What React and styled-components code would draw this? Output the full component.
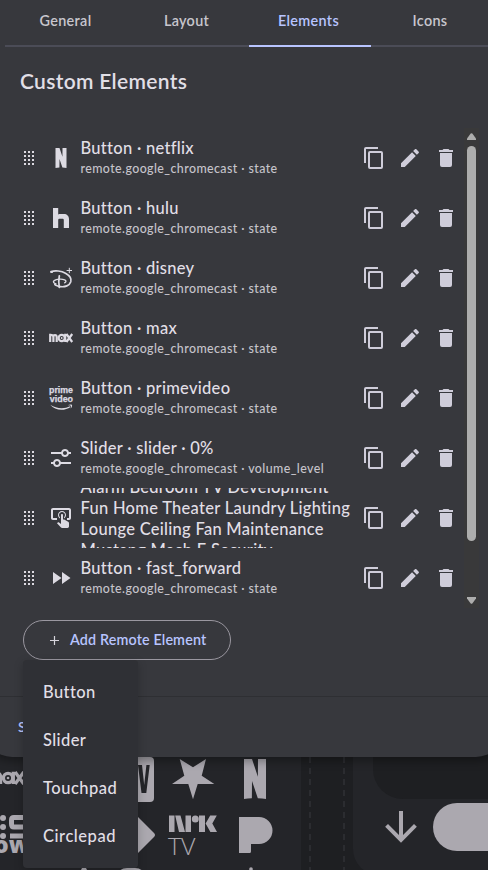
import React from 'react';
import styled, { createGlobalStyle } from 'styled-components';

const GlobalStyle = createGlobalStyle`
  *, *::before, *::after { box-sizing: border-box; }
  body { margin: 0; background: #1e1f22; font-family: Lato, "Open Sans", sans-serif; }
`;

const Screen = styled.div`
  width: 488px;
  height: 870px;
  overflow: hidden;
  position: relative;
  background: #1e1f22;
  color: #e1dfe6;
`;

/* ---- Dialog ---- */
const Dialog = styled.main`
  position: relative;
  z-index: 1;
  width: 520px;
  height: 757px;
  margin-left: -16px;
  padding-left: 16px;
  display: flex;
  flex-direction: column;
  background: #37383d;
  border-radius: 0 0 28px 28px;
  box-shadow: 0 4px 10px rgba(0, 0, 0, 0.35);
`;

const TabBar = styled.nav`
  display: flex;
  flex: none;
  height: 47px;
  margin-left: 5px;
`;

const Tab = styled.button`
  flex: none;
  width: 122px;
  height: 47px;
  padding: 0 ${p => p.$inset}px 4px 0;
  border: 0;
  border-bottom: 2px solid ${p => (p.$active ? '#b8c4ff' : '#4b4c57')};
  background: none;
  color: ${p => (p.$active ? '#b8c4ff' : '#c8c6cd')};
  font: 600 14.4px/20px Lato, sans-serif;
  letter-spacing: 0.32px;
`;

const Heading = styled.h1`
  flex: none;
  height: 81px;
  margin: 0;
  padding: 20px 0 0 20px;
  font: 600 21px/28px Lato, sans-serif;
  letter-spacing: 0.32px;
`;

const ListArea = styled.section`
  flex: none;
  display: flex;
  width: 479px;
  height: 480px;
`;

const List = styled.ul`
  width: 464px;
  margin: 0;
  padding: 0;
  list-style: none;
`;

const Row = styled.li`
  display: flex;
  align-items: center;
  height: 60px;
  padding-left: 24px;
  overflow: hidden;
`;

const Handle = styled.svg`
  flex: none;
  width: 10px;
  height: 14px;
  margin-right: 15px;
  fill: #dcdae1;
`;

const Glyph = styled.svg`
  flex: none;
  width: ${p => p.$size || 24}px;
  height: ${p => p.$size || 24}px;
  fill: ${p => p.$color || '#dddbe3'};
  color: ${p => p.$color || '#dddbe3'};
  overflow: visible;
`;

const Labels = styled.div`
  flex: none;
  width: 281px;
  padding: 2px 0 0 7.5px;
`;

const Primary = styled.div`
  font: 500 16.5px/20.8px Lato, sans-serif;
  letter-spacing: 0.28px;
  white-space: nowrap;
`;

const Secondary = styled.div`
  padding: 1px 0;
  font: 500 12.4px/20px Lato, sans-serif;
  letter-spacing: 0.42px;
  color: #c6c4cb;
  white-space: nowrap;
`;

const Actions = styled.div`
  display: flex;
  gap: 12px;
  margin-left: 8px;
`;

const ActionButton = styled.button`
  display: flex;
  padding: 0;
  border: 0;
  background: none;
`;

const Scrollbar = styled.div`
  display: flex;
  flex-direction: column;
  align-items: center;
  width: 15px;
  padding: 5px 0 4px;
  background: #39393a;
`;

const ScrollArrow = styled.svg`
  flex: none;
  width: 9px;
  height: 7px;
  fill: #adadad;
`;

const Thumb = styled.div`
  width: 9px;
  height: 395px;
  margin: 6px 0 56px;
  border-radius: 5px;
  background: #adadad;
`;

const AddArea = styled.div`
  flex: none;
  height: 88px;
  padding: 12px 0 0 23px;
`;

const AddButton = styled.button`
  display: flex;
  align-items: center;
  width: 208px;
  height: 40px;
  padding: 0 0 0 26px;
  border: 1px solid #9a97a0;
  border-radius: 20px;
  background: none;
  color: #b8c4ff;
  font: 600 14.3px/20px Lato, sans-serif;
  letter-spacing: 0.15px;
  white-space: nowrap;
`;

const Plus = styled.svg`
  width: 9px;
  height: 9px;
  margin-right: 11px;
  stroke: #d6d4db;
  stroke-width: 1.2;
`;

const Footer = styled.footer`
  flex: 1;
  border-top: 1px solid #2e2f33;
  padding: 20px 0 0 18px;
  color: #b8c4ff;
  font: 600 14px/20px Lato, sans-serif;
`;

/* ---- Element type menu ---- */
const Menu = styled.div`
  position: absolute;
  z-index: 2;
  left: 23px;
  top: 660px;
  width: 115px;
  height: 208px;
  padding: 8px 0;
  border-radius: 4px;
  background: #2f3035;
  box-shadow: 0 3px 10px rgba(0, 0, 0, 0.22);
`;

const MenuItem = styled.div`
  height: 48px;
  padding-left: 20px;
  font: 500 16.5px/48px Lato, sans-serif;
  letter-spacing: ${p => p.$spacing}px;
`;

/* ---- Dimmed page behind the dialog ---- */
const Backdrop = styled.div`
  display: flex;
  height: 141px;
  margin-top: -28px;
`;

const IconPanel = styled.div`
  flex: none;
  width: 301px;
  background: #242529;
`;

const Gutter = styled.div`
  flex: none;
  width: 36px;
  height: 141px;
  margin: 0 8px;
  background-image: linear-gradient(#2b2c30 55%, transparent 55%), linear-gradient(#2b2c30 55%, transparent 55%);
  background-size: 2px 11px;
  background-position: 0 6px, 100% 6px;
  background-repeat: repeat-y;
`;

const RemotePanel = styled.div`
  flex: none;
  width: 160px;
  height: 146px;
  border-radius: 0 0 0 26px;
  background: #242529;
`;

const Screenlet = styled.div`
  height: 70px;
  margin-left: 20px;
  border-radius: 0 0 0 30px;
  background: #1e1f22;
`;

const Controls = styled.div`
  display: flex;
  align-items: center;
  gap: 8px;
  padding: 4px 0 0 24px;
`;

const Pill = styled.div`
  width: 96px;
  height: 48px;
  border-radius: 24px;
  background: #aba8af;
`;

const Artwork = styled.svg`
  display: block;
  width: 301px;
  height: 141px;
  fill: #aba8af;
  color: #aba8af;
`;

const PATHS = {
  copy: 'M19,21H8V7H19M19,5H8A2,2 0 0,0 6,7V21A2,2 0 0,0 8,23H19A2,2 0 0,0 21,21V7A2,2 0 0,0 19,5M16,1H4A2,2 0 0,0 2,3V17H4V3H16V1Z',
  edit: 'M20.71,7.04C21.1,6.65 21.1,6 20.71,5.63L18.37,3.29C18,2.9 17.35,2.9 16.96,3.29L15.12,5.12L18.87,8.87M3,17.25V21H6.75L17.81,9.93L14.06,6.18L3,17.25Z',
  remove: 'M19,4H15.5L14.5,3H9.5L8.5,4H5V6H19M6,19A2,2 0 0,0 8,21H16A2,2 0 0,0 18,19V7H6V19Z',
  netflix: 'M6.5,2H10.5L13.44,10.83L13.5,2H17.5V22C16.25,21.78 14.87,21.64 13.41,21.58L10.5,13L10.43,21.59C9.03,21.65 7.7,21.79 6.5,22V2Z',
  hulu: 'M4,2H9.2V8.4C9.8,8.2 10.7,8.1 11.4,8.1H15C17.8,8.1 20,10.2 20,13V22H14.8V13.9C14.8,13.2 14.2,12.7 13.5,12.7H10.5C9.8,12.7 9.2,13.2 9.2,13.9V22H4Z',
  slider: 'M8 13C6.14 13 4.59 14.28 4.14 16H2V18H4.14C4.59 19.72 6.14 21 8 21S11.41 19.72 11.86 18H22V16H11.86C11.41 14.28 9.86 13 8 13M8 19C6.9 19 6 18.1 6 17C6 15.9 6.9 15 8 15S10 15.9 10 17C10 18.1 9.1 19 8 19M19.86 6C19.41 4.28 17.86 3 16 3S12.59 4.28 12.14 6H2V8H12.14C12.59 9.72 14.14 11 16 11S19.41 9.72 19.86 8H22V6H19.86M16 9C14.9 9 14 8.1 14 7C14 5.9 14.9 5 16 5S18 5.9 18 7C18 8.1 17.1 9 16 9Z',
  touchpad: 'M13 5C15.21 5 17 6.79 17 9C17 10.5 16.2 11.77 15 12.46V11.24C15.61 10.69 16 9.89 16 9C16 7.34 14.66 6 13 6S10 7.34 10 9C10 9.89 10.39 10.69 11 11.24V12.46C9.8 11.77 9 10.5 9 9C9 6.79 10.79 5 13 5M20 20.5C19.97 21.32 19.32 21.97 18.5 22H13C12.62 22 12.26 21.85 12 21.57L8 17.37L8.74 16.6C8.93 16.39 9.2 16.28 9.5 16.28H9.7L12 18V9C12 8.45 12.45 8 13 8S14 8.45 14 9V13.47L15.21 13.6L19.15 15.79C19.68 16.03 20 16.56 20 17.14V20.5M20 2H4C2.9 2 2 2.9 2 4V12C2 13.11 2.9 14 4 14H8V12L4 12L4 4H20L20 12H18V14H20V13.97L20.04 14C21.13 13.96 22 13.09 22 12V4C22 2.9 21.11 2 20 2Z',
  forward: 'M13,6V18L21.5,12M4,18L12.5,12L4,6V18Z',
  arrowDown: 'M11,4H13V16L18.5,10.5L19.92,11.92L12,19.84L4.08,11.92L5.5,10.5L11,16V4Z',
};

function MaxMark() {
  return (
    <g fill="none" stroke="currentColor" strokeWidth="2.2">
      <path d="M1.2,16V7.8M1.2,11.2C1.2,8.3 4.4,8.2 4.4,11.2V16M4.4,11.2C4.4,8.3 7.7,8.2 7.7,11.2V16" />
      <circle cx="12.7" cy="12" r="3.1" />
      <circle cx="12.7" cy="12" r="0.9" fill="currentColor" stroke="none" />
      <path d="M16.2,7.8V16M17.4,8L23.2,16M23.2,8L17.4,16" />
    </g>
  );
}

function DisneyMark() {
  return (
    <g fill="none" stroke="currentColor" strokeLinecap="round">
      <path strokeWidth="1.7" d="M3.2,6.2C2.2,6.4 1.4,6 2.2,5.6C6,4.2 12.5,4.8 16.5,7.2C21,9.7 22.6,12.8 21.8,15.8C20.6,19.6 16,21.2 11.5,20.6C8.4,20.2 6.4,19.4 5.8,18.4" />
      <path strokeWidth="1.3" d="M7,17.8C4.6,17.2 3.6,15.6 5.2,14.6C7.4,13.2 12.5,12.6 15.6,13.8C17.4,14.5 17.4,16 15.6,16.8" />
      <path strokeWidth="1.8" d="M10.3,10C9.6,13.5 9.7,18 10.3,21.4" />
      <path strokeWidth="1" strokeLinecap="butt" d="M20.3,1.8V7.2M17.6,4.5H23" />
    </g>
  );
}

function PrimeMark() {
  return (
    <g>
      <g fontFamily="Liberation Sans, sans-serif" fontWeight="700" fontSize="9" stroke="currentColor" strokeWidth="0.25">
        <text x="0" y="7.2" textLength="24" lengthAdjust="spacingAndGlyphs">prime</text>
        <text x="0.8" y="15.7" textLength="23.2" lengthAdjust="spacingAndGlyphs">video</text>
      </g>
      <path d="M1.3,18.8C7,22.7 15.5,23.2 21,20.3L21.6,21C15.5,25.3 6,24.8 1.3,18.8ZM18.8,19.3C20.3,18.2 22.5,18.3 23,18.9C23.4,19.6 22.8,21.7 21.6,22.6C22,21.3 22.3,20.2 21.8,19.8C21.3,19.3 20,19.3 18.8,19.3Z" />
    </g>
  );
}

const MARKS = { max: <MaxMark />, disney: <DisneyMark />, prime: <PrimeMark /> };

function Icon({ name, size, color }) {
  return (
    <Glyph viewBox="0 0 24 24" $size={size} $color={color}>
      {MARKS[name] || <path d={PATHS[name]} />}
    </Glyph>
  );
}

const STATE = 'remote.google_chromecast · state';

const ELEMENTS = [
  { icon: 'netflix', lines: ['Button · netflix'], detail: STATE },
  { icon: 'hulu', lines: ['Button · hulu'], detail: STATE },
  { icon: 'disney', lines: ['Button · disney'], detail: STATE },
  { icon: 'max', lines: ['Button · max'], detail: STATE },
  { icon: 'prime', lines: ['Button · primevideo'], detail: STATE },
  { icon: 'slider', lines: ['Slider · slider · 0%'], detail: 'remote.google_chromecast · volume_level' },
  {
    icon: 'touchpad',
    lines: [
      'Alarm Bedroom TV Development',
      'Fun Home Theater Laundry Lighting',
      'Lounge Ceiling Fan Maintenance',
      'Mustang Mach E Security',
    ],
  },
  { icon: 'forward', lines: ['Button · fast_forward'], detail: STATE },
];

const TABS = [['General', 1], ['Layout', 3], ['Elements', 3], ['Icons', 4]];
const MENU = [['Button', 0.4], ['Slider', 0.4], ['Touchpad', 0.5], ['Circlepad', 0.55]];

function DragHandle() {
  return (
    <Handle viewBox="0 0 10 14" shapeRendering="crispEdges">
      {[0, 4, 8, 12].map(y => [0, 4, 8].map(x => <rect key={`${x}-${y}`} x={x} y={y} width="2" height="2" />))}
    </Handle>
  );
}

function ElementRow({ icon, lines, detail }) {
  return (
    <Row>
      <DragHandle />
      <Icon name={icon} />
      <Labels>
        {lines.map(line => <Primary key={line}>{line}</Primary>)}
        {detail && <Secondary>{detail}</Secondary>}
      </Labels>
      <Actions>
        {['copy', 'edit', 'remove'].map(name => (
          <ActionButton key={name} aria-label={name}><Icon name={name} color="#cfcdda" /></ActionButton>
        ))}
      </Actions>
    </Row>
  );
}

function ServiceLogos() {
  return (
    <Artwork viewBox="0 729 301 141">
      <g transform="translate(-11 760) scale(1.5)"><MaxMark /></g>
      <circle cx="3" cy="818" r="3" />
      <circle cx="3" cy="827" r="3" />
      <circle cx="3" cy="836" r="3" />
      <path fill="none" stroke="currentColor" strokeWidth="5" d="M26,817.5H14Q11.5,817.5 11.5,820V824Q11.5,827 14,827H26M10,836H26" />
      <text x="-6" y="853" fontFamily="Open Sans, sans-serif" fontWeight="800" fontSize="23">ow</text>
      <rect x="110" y="757" width="44" height="45" rx="4" />
      <path fill="#242529" d="M138,765H142L144.2,785L146.4,765H149.7L146.3,793H141.5Z" />
      <path d="M179.7,759L193,767.3L206,759L201.7,775.7L214.3,784H197.7L193,799.3L188.3,784H172L184.3,775.7Z" />
      <path d="M137,816L154,833Q156,835 154,837L137,854Z" />
      <g transform="translate(231 755) scale(2)"><path d={PATHS.netflix} /></g>
      <path d="M169,815.5H174.5V832H169ZM175.2,815.5H180.5L185,832H179ZM185.5,815.5H191V832H185.5ZM199,815.5H205V832H199ZM205.6,823.5L210.2,815.5H216.8L212.3,823.5L217,832H210.4Z" />
      <circle cx="195.3" cy="819" r="3.5" />
      <text x="168" y="855" fontFamily="Open Sans, sans-serif" fontWeight="300" fontSize="23.5" textLength="27.5" lengthAdjust="spacingAndGlyphs">TV</text>
      <path d="M239,817H259A13.5,13.5 0 0 1 259,844H251V851.5Q251,853 249.5,853H239Z" />
      <path d="M119,872Q121,868 127,868H135Q141,868 143,872Z" />
      <circle cx="251" cy="869" r="1.8" />
      <path d="M82,868H86L87,870H81Z" />
    </Artwork>
  );
}

export default function App() {
  return (
    <Screen>
      <GlobalStyle />
      <Dialog>
        <TabBar>
          {TABS.map(([label, inset]) => (
            <Tab key={label} $active={label === 'Elements'} $inset={inset}>{label}</Tab>
          ))}
        </TabBar>
        <Heading>Custom Elements</Heading>
        <ListArea>
          <List>{ELEMENTS.map(el => <ElementRow key={el.icon} {...el} />)}</List>
          <Scrollbar>
            <ScrollArrow viewBox="0 0 9 7"><path d="M3.7,0.6Q4.5,-0.3 5.3,0.6L9,5.5V7H0V5.5Z" /></ScrollArrow>
            <Thumb />
            <ScrollArrow viewBox="0 0 9 7"><path d="M0,0H9V1.5L5.3,6.4Q4.5,7.3 3.7,6.4L0,1.5Z" /></ScrollArrow>
          </Scrollbar>
        </ListArea>
        <AddArea>
          <AddButton>
            <Plus viewBox="0 0 9 9"><path d="M4.5,0V9M0,4.5H9" /></Plus>
            Add Remote Element
          </AddButton>
        </AddArea>
        <Footer>S</Footer>
      </Dialog>
      <Backdrop>
        <IconPanel><ServiceLogos /></IconPanel>
        <Gutter />
        <RemotePanel>
          <Screenlet />
          <Controls>
            <Icon name="arrowDown" size={48} color="#aba8af" />
            <Pill />
          </Controls>
        </RemotePanel>
      </Backdrop>
      <Menu>
        {MENU.map(([label, spacing]) => <MenuItem key={label} $spacing={spacing}>{label}</MenuItem>)}
      </Menu>
    </Screen>
  );
}
